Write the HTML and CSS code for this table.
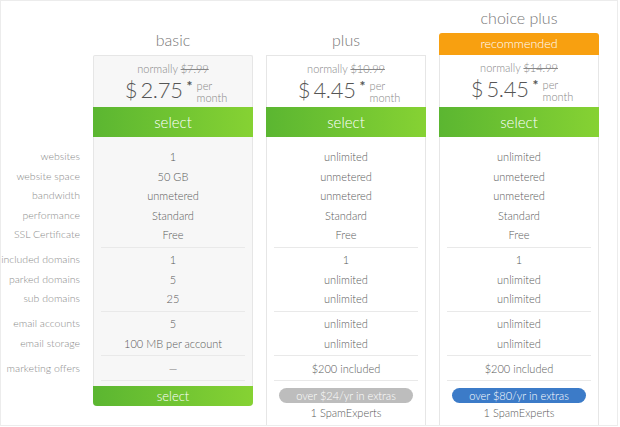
FILE: index.html
```html
<!DOCTYPE html>
<html>
<head>
<meta charset="utf-8">
<link rel="stylesheet" href="styles.css">
</head>
<body>
<div class="page">
  <div class="labels">
    <div class="group">
      <div class="row">websites</div>
      <div class="row">website space</div>
      <div class="row">bandwidth</div>
      <div class="row">performance</div>
      <div class="row">SSL Certificate</div>
    </div>
    <div class="sep blank"></div>
    <div class="group">
      <div class="row">included domains</div>
      <div class="row">parked domains</div>
      <div class="row">sub domains</div>
    </div>
    <div class="sep blank"></div>
    <div class="group">
      <div class="row">email accounts</div>
      <div class="row">email storage</div>
    </div>
    <div class="sep blank"></div>
    <div class="group">
      <div class="row">marketing offers</div>
    </div>
  </div>

  <div class="plan">
    <div class="plan-head">
      <div class="title">basic</div>
    </div>
    <div class="card card-basic">
      <div class="price-box">
        <div class="normally">normally <s>$7.99</s></div>
        <div class="price"><span class="cur">$</span><span class="amt">2.75</span><span class="star">*</span><span class="per">per<br>month</span></div>
      </div>
      <div class="select">select</div>
      <div class="features">
        <div class="row">1</div>
        <div class="row">50 GB</div>
        <div class="row">unmetered</div>
        <div class="row">Standard</div>
        <div class="row">Free</div>
        <div class="sep"></div>
        <div class="row">1</div>
        <div class="row">5</div>
        <div class="row">25</div>
        <div class="sep"></div>
        <div class="row">5</div>
        <div class="row">100 MB per account</div>
        <div class="sep"></div>
        <div class="row">—</div>
        <div class="sep"></div>
      </div>
      <div class="select-bottom">select</div>
    </div>
  </div>

  <div class="plan">
    <div class="plan-head">
      <div class="title">plus</div>
    </div>
    <div class="card">
      <div class="price-box">
        <div class="normally">normally <s>$10.99</s></div>
        <div class="price"><span class="cur">$</span><span class="amt">4.45</span><span class="star">*</span><span class="per">per<br>month</span></div>
      </div>
      <div class="select">select</div>
      <div class="features">
        <div class="row">unlimited</div>
        <div class="row">unmetered</div>
        <div class="row">unmetered</div>
        <div class="row">Standard</div>
        <div class="row">Free</div>
        <div class="sep"></div>
        <div class="row">1</div>
        <div class="row">unlimited</div>
        <div class="row">unlimited</div>
        <div class="sep"></div>
        <div class="row">unlimited</div>
        <div class="row">unlimited</div>
        <div class="sep"></div>
        <div class="row">$200 included</div>
        <div class="sep"></div>
        <div class="row"><span class="pill pill-grey">over $24/yr in extras</span></div>
        <div class="row">1 SpamExperts</div>
      </div>
    </div>
  </div>

  <div class="plan">
    <div class="plan-head">
      <div class="title">choice plus</div>
      <div class="recommended">recommended</div>
    </div>
    <div class="card card-choice">
      <div class="price-box">
        <div class="normally">normally <s>$14.99</s></div>
        <div class="price"><span class="cur">$</span><span class="amt">5.45</span><span class="star">*</span><span class="per">per<br>month</span></div>
      </div>
      <div class="select">select</div>
      <div class="features">
        <div class="row">unlimited</div>
        <div class="row">unmetered</div>
        <div class="row">unmetered</div>
        <div class="row">Standard</div>
        <div class="row">Free</div>
        <div class="sep"></div>
        <div class="row">1</div>
        <div class="row">unlimited</div>
        <div class="row">unlimited</div>
        <div class="sep"></div>
        <div class="row">unlimited</div>
        <div class="row">unlimited</div>
        <div class="sep"></div>
        <div class="row">$200 included</div>
        <div class="sep"></div>
        <div class="row"><span class="pill pill-blue">over $80/yr in extras</span></div>
        <div class="row">1 SpamExperts</div>
      </div>
    </div>
  </div>
</div>
</body>
</html>
```

FILE: styles.css
```css
* { box-sizing: border-box; }
html, body { margin: 0; padding: 0; background: #fff; }
body { font-family: "Lato", "Liberation Sans", sans-serif; font-weight: 300; color: #5a5a5a; }

.page {
  width: 618px;
  height: 426px;
  border: 1px solid #ececec;
  display: flex;
  align-items: flex-start;
  overflow: hidden;
}

.labels {
  width: 79px;
  margin-right: 13px;
  padding-top: 146.25px;
  text-align: right;
  color: #8a8a8a;
}
.labels .row { font-size: 10.5px; }

.row {
  height: 19.5px;
  line-height: 19.5px;
  font-size: 11px;
  white-space: nowrap;
}

.sep {
  height: 1px;
  background: #e9e9e9;
  margin: 2px 7px 2.5px;
}
.sep.blank { background: transparent; }

.plan {
  width: 160px;
  margin-right: 13px;
  display: flex;
  flex-direction: column;
}

.plan-head {
  height: 54px;
  display: flex;
  flex-direction: column;
  justify-content: flex-end;
  align-items: stretch;
}

.title {
  text-align: center;
  font-size: 16px;
  line-height: 20px;
  color: #777;
  margin-bottom: 5px;
}

.recommended {
  height: 22px;
  line-height: 22px;
  background: #f8a010;
  color: #fff;
  text-align: center;
  font-size: 12.5px;
  border-radius: 3px 3px 0 0;
}

.card {
  border: 1px solid #e6e6e6;
  background: #fff;
  height: 400px;
}
.card-choice { border-top: none; }
.card-choice .price-box { height: 52px; }
.card-basic {
  background: #f7f7f7;
  height: auto;
  border-bottom: none;
  border-radius: 2px 2px 4px 4px;
}

.price-box {
  height: 51px;
  text-align: center;
  padding-top: 5px;
}

.normally {
  font-size: 11px;
  line-height: 15px;
  color: #888;
}
.normally s { color: #888; }

.price {
  display: flex;
  justify-content: center;
  align-items: flex-start;
  height: 28px;
  color: #555;
  padding-left: 6px;
}
.cur {
  font-size: 22px;
  line-height: 28px;
  margin-right: 3px;
}
.amt {
  font-size: 22px;
  line-height: 28px;
  letter-spacing: -0.3px;
}
.star {
  font-size: 14px;
  line-height: 14px;
  margin: 3px 4px 0 4px;
  font-weight: 700;
}
.per {
  font-size: 11px;
  line-height: 12px;
  color: #888;
  text-align: left;
  padding-top: 4px;
}

.select {
  height: 30px;
  line-height: 30px;
  margin: 0 -1px;
  background: linear-gradient(90deg, #5bb631, #86d233);
  color: #fff;
  font-size: 15px;
  text-align: center;
}

.features {
  padding-top: 10.25px;
  text-align: center;
}

.select-bottom {
  height: 20px;
  line-height: 20px;
  margin: 5px -1px 0;
  background: linear-gradient(90deg, #5bb631, #86d233);
  color: #fff;
  font-size: 13px;
  text-align: center;
  border-radius: 0 0 4px 4px;
}

.pill {
  display: inline-block;
  width: 134px;
  height: 15px;
  line-height: 15px;
  border-radius: 8px;
  color: #fff;
  font-size: 11px;
  vertical-align: middle;
}
.pill-grey { background: #bdbdbd; }
.pill-blue { background: #3c7bc8; }
```
